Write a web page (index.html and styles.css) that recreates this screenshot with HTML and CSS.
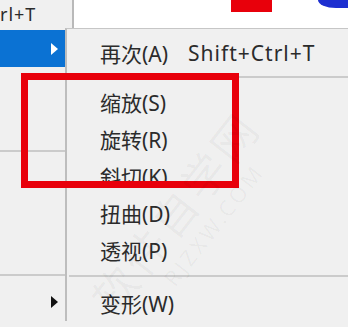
FILE: index.html
```html
<!DOCTYPE html>
<html lang="zh-CN">
<head>
    <meta charset="UTF-8">
    <meta name="viewport" content="width=device-width, initial-scale=1.0">
    <title>变换菜单</title>
    <link rel="stylesheet" href="styles.css">
</head>
<body>
    <div class="screen">
        <div class="topbar">
            <div class="prev-item"><span>rl+T</span></div>
            <div class="canvas">
                <div class="red-block"></div>
                <div class="blue-blob"></div>
            </div>
        </div>

        <div class="menus">
            <!-- parent menu, partly covered by the submenu -->
            <div class="parent-menu">
                <div class="parent-row active"><span class="arrow"></span></div>
                <div class="sep sep-first"></div>
                <div class="sep sep-second"></div>
                <div class="parent-row last"><span class="arrow"></span></div>
            </div>

            <div class="submenu">
                <div class="item"><span class="label">再次(A)</span><span class="shortcut">Shift+Ctrl+T</span></div>
                <div class="sub-sep"></div>
                <div class="item"><span class="label">缩放(S)</span></div>
                <div class="item"><span class="label">旋转(R)</span></div>
                <div class="item"><span class="label">斜切(K)</span></div>
                <div class="item"><span class="label">扭曲(D)</span></div>
                <div class="item"><span class="label">透视(P)</span></div>
                <div class="sub-sep sub-sep-low"></div>
                <div class="item"><span class="label">变形(W)</span></div>
            </div>
        </div>

        <!-- annotation drawn over the menu -->
        <div class="highlight-box"></div>
        <div class="watermark">
            <span class="wm-cn">软件自学网</span>
            <span class="wm-en">RJZXW.COM</span>
        </div>
    </div>
</body>
</html>
```

FILE: styles.css
```css
body {
    margin: 0;
    padding: 0;
    background: #f0f0f0;
    font-family: "Noto Sans", "Noto Sans CJK SC", sans-serif;
    color: #2b2b2b;
    overflow: hidden;
}

.screen {
    width: 348px;
    height: 327px;
    position: relative;
    overflow: hidden;
    background: #f0f0f0;
}

.topbar {
    display: flex;
    height: 28px;
}
.prev-item {
    width: 72px;
    border-right: 2px solid #b9b9b9;
    background: #f0f0f0;
    font-size: 18px;
    line-height: 28px;
    letter-spacing: 1px;
    white-space: nowrap;
    overflow: hidden;
}
.canvas {
    flex: 1;
    background: #fff;
    display: flex;
    align-items: flex-start;
}
.red-block {
    margin-left: 157px;
    width: 41px;
    height: 12px;
    background: #e8000b;
}
.blue-blob {
    margin-left: 46px;
    flex: 1;
    height: 8px;
    background: #1d2fd0;
    border-bottom-left-radius: 18px 8px;
}

.menus {
    display: flex;
}
.parent-menu {
    width: 65px;
    display: flex;
    flex-direction: column;
}
.parent-row {
    height: 37px;
    display: flex;
    align-items: center;
    justify-content: flex-end;
    padding-right: 7px;
}
.parent-row.active {
    margin-top: 2px;
    background: #0b72d3;
}
.parent-row.last {
    margin-top: 7px;
}
.arrow {
    width: 0;
    height: 0;
    border-top: 6px solid transparent;
    border-bottom: 6px solid transparent;
    border-left: 7px solid #111;
}
.active .arrow {
    border-left-color: #fff;
}
.sep {
    height: 2px;
    background: #cbcbcb;
}
.sep-first {
    margin-top: 83px;
}
.sep-second {
    margin-top: 122px;
}

.submenu {
    flex: 1;
    border-left: 2px solid #bdbdbd;
    border-top: 1px solid #c6c6c6;
    padding-top: 5px;
    font-size: 21px;
}
.item {
    height: 37px;
    display: flex;
    align-items: center;
    padding-left: 33px;
    white-space: nowrap;
}
.shortcut {
    margin-left: 20px;
    letter-spacing: 1px;
}
.sub-sep {
    height: 2px;
    margin: 5px 0 5px 2px;
    background: #cbcbcb;
}
.sub-sep-low {
    margin-top: 7px;
    margin-bottom: 7px;
}

.highlight-box {
    position: absolute;
    left: 21px;
    top: 73px;
    width: 218px;
    height: 115px;
    border: 7px solid #e8000b;
    box-sizing: border-box;
}

.watermark {
    position: absolute;
    left: 75px;
    top: 286px;
    transform: rotate(-52deg);
    transform-origin: left top;
    color: rgba(0, 0, 0, 0.04);
    white-space: nowrap;
    pointer-events: none;
}
.wm-cn {
    display: block;
    font-size: 44px;
    letter-spacing: 4px;
}
.wm-en {
    display: block;
    font-size: 22px;
    letter-spacing: 3px;
    margin-left: 60px;
    margin-top: -8px;
}
```
